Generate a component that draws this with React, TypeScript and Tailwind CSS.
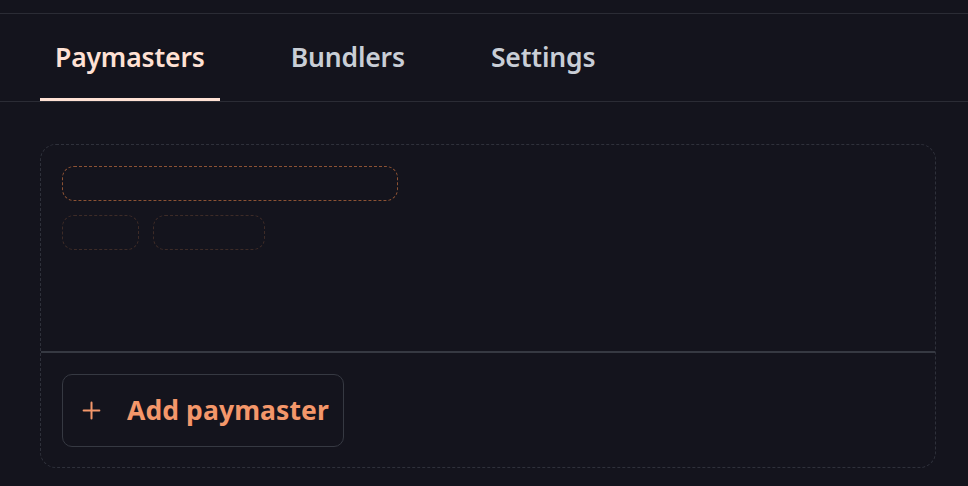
import React, { useState } from 'react';
import { Plus } from 'lucide-react';

const tabs = ['Paymasters', 'Bundlers', 'Settings'];

export default function App() {
  const [active, setActive] = useState('Paymasters');

  return (
    <div
      className="min-h-screen w-full bg-[#14141d] text-white"
      style={{ fontFamily: '"Noto Sans", "Open Sans", sans-serif' }}
    >
      <div className="h-[13px]" />
      <div className="border-t border-b border-[#2b2c35]">
        <nav className="flex gap-[56px] px-[40px]">
          {tabs.map((tab) => (
            <button
              key={tab}
              onClick={() => setActive(tab)}
              className={`relative h-[87px] px-[15px] text-[26.5px] font-semibold leading-none tracking-[-0.15px] ${
                active === tab ? 'text-[#ffe1d4]' : 'text-[#c9ced6]'
              }`}
            >
              <span>{tab}</span>
              {active === tab && (
                <span className="absolute bottom-0 left-0 right-0 h-[3px] bg-[#ffe1d4]" />
              )}
            </button>
          ))}
        </nav>
      </div>

      <div className="px-[40px] pt-[42px] pr-[32px]">
        <div className="rounded-[16px] border border-dashed border-[#2f313b]">
          <div className="h-[206px] p-[21px]">
            <div className="h-[35px] w-[336px] rounded-[12px] border border-dashed border-[#8c5234]" />
            <div className="mt-[14px] flex gap-[14px]">
              <div className="h-[35px] w-[77px] rounded-[12px] border border-dashed border-[#3d2b27]" />
              <div className="h-[35px] w-[112px] rounded-[12px] border border-dashed border-[#3d2b27]" />
            </div>
          </div>
          <div className="border-t-2 border-[#363942] px-[21px] pt-[21px] pb-[20px]">
            <button className="flex h-[73px] items-center gap-[22px] rounded-[10px] border border-[#363942] pl-[15px] pr-[14px] text-[26.5px] font-bold tracking-[0.1px] text-[#f4976a]">
              <Plus className="h-[27px] w-[27px]" strokeWidth={1.8} />
              <span>Add paymaster</span>
            </button>
          </div>
        </div>
      </div>
    </div>
  );
}
